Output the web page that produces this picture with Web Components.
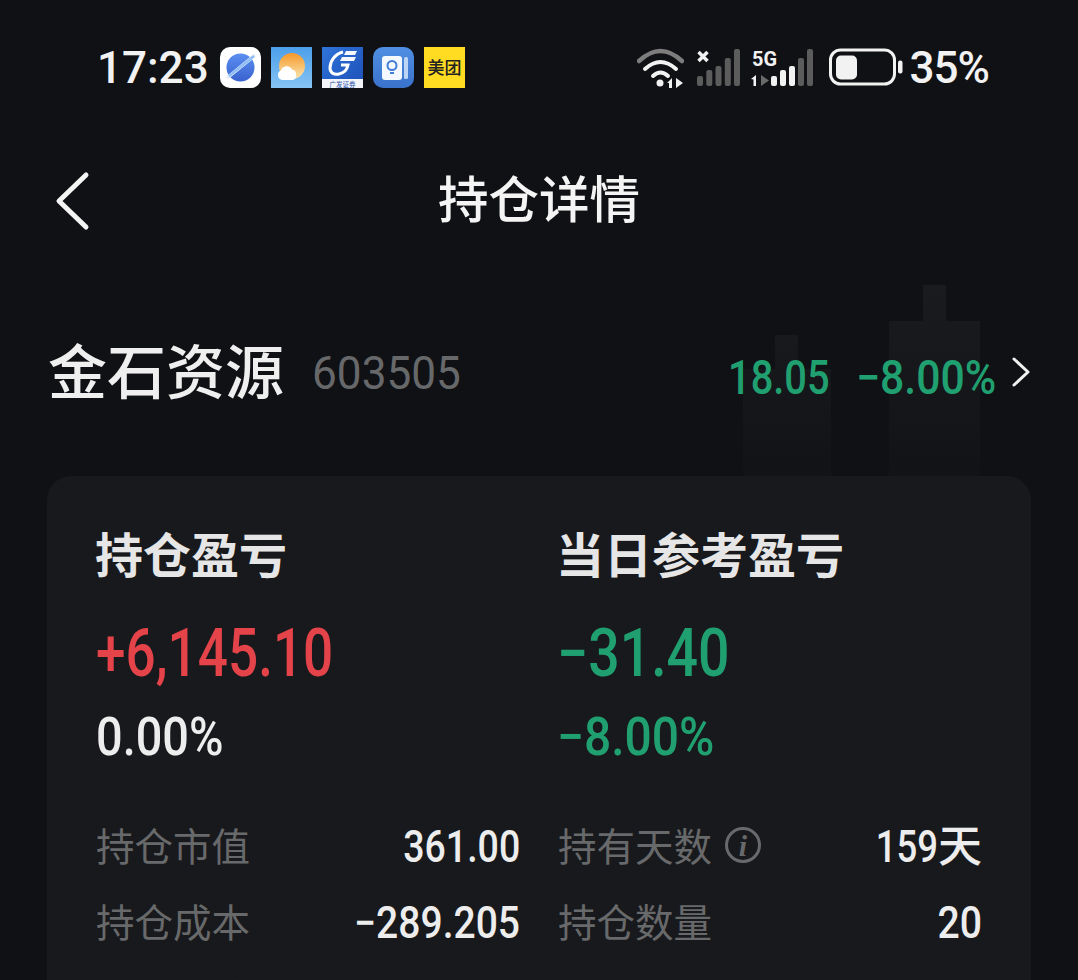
<!DOCTYPE html>
<html><head><meta charset="utf-8">
<style>
html,body{margin:0;padding:0;background:#101114;height:980px;overflow:hidden}
body{font-family:"Noto Sans CJK SC","Noto Sans",sans-serif}
</style></head><body>
<phone-page></phone-page>
<template id="t-num">
<style>:host{display:inline-block;transform:scaleX(var(--sx,1));transform-origin:var(--o,left);white-space:nowrap;font-family:Roboto,sans-serif}</style><slot></slot>
</template>
<template id="t-status">
<style>
:host{display:flex;align-items:center;height:135px;padding:0 89px 0 97px;box-sizing:border-box;justify-content:space-between;color:#f2f2f2;font-family:Roboto,sans-serif}
.l,.r{display:flex;align-items:center}
.time{font-size:44px;font-weight:500;width:123px;white-space:nowrap}
.l svg{display:block;margin-right:10px}
.l svg:last-child{margin-right:0}
.pct{font-size:44px;font-weight:500;margin-left:6px;letter-spacing:-1px}
.r svg{display:block}
</style>
<div class="l">
<span class="time">17:23</span>
<svg width="41" height="41" viewBox="0 0 41 41"><defs><linearGradient id="pl" x1="0" y1="0" x2="0" y2="1"><stop offset="0" stop-color="#5b8ff0"/><stop offset="1" stop-color="#3a62cf"/></linearGradient></defs><rect width="41" height="41" rx="10" fill="#fff"/><circle cx="20.500" cy="20.500" r="14" fill="url(#pl)"/><path d="M7 31 L35 8" stroke="#e4eefc" stroke-width="3.500"/><path d="M9 29 L34 9" stroke="#8fbdf5" stroke-width="2.500"/></svg>
<svg width="41" height="41" viewBox="0 0 41 41"><defs><linearGradient id="s" x1="0" y1="0" x2="0" y2="1"><stop offset="0" stop-color="#f5982a"/><stop offset="1" stop-color="#fbe6b0"/></linearGradient><linearGradient id="sk" x1="0" y1="0" x2="0" y2="1"><stop offset="0" stop-color="#4b9fea"/><stop offset="1" stop-color="#86c4f4"/></linearGradient></defs><rect width="41" height="41" fill="url(#sk)"/><circle cx="21" cy="19" r="13" fill="url(#s)"/><path d="M11 33a5 5 0 0 1-1-9.500 6 6 0 0 1 11-1 5 5 0 0 1 4 5.500 4.500 4.500 0 0 1-3 5z" fill="#fff"/></svg>
<svg width="41" height="41" viewBox="0 0 41 41"><defs><linearGradient id="gf" x1="0" y1="0" x2="1" y2="1"><stop offset="0" stop-color="#2f74d8"/><stop offset="1" stop-color="#1d4fb8"/></linearGradient></defs><rect width="41" height="41" fill="url(#gf)"/><rect y="32" width="41" height="9" fill="#f2f4f8"/><path d="M21 5C13 7 8 14 8 21c0 5 4 7 9 6 5-1 8-4 9-9h-7" fill="none" stroke="#fff" stroke-width="3"/><path d="M18 14l2-4h14l-2 4zM22 8l2-4h11l-2 4z" fill="#fff" opacity=".95"/><text x="20.500" y="39.500" font-size="6.500" text-anchor="middle" fill="#1f4fa8" font-family="Noto Sans CJK SC">广发证券</text></svg>
<svg width="41" height="41" viewBox="0 0 41 41"><defs><linearGradient id="bk" x1="0" y1="0" x2="0" y2="1"><stop offset="0" stop-color="#4f8fe2"/><stop offset="1" stop-color="#3a72cc"/></linearGradient></defs><rect width="41" height="41" rx="10" fill="url(#bk)"/><rect x="9" y="9" width="20" height="24" rx="3" fill="#f4f8ff"/><rect x="31" y="10" width="4" height="22" rx="1.500" fill="#bcd5f5"/><circle cx="19" cy="18.500" r="4.500" fill="none" stroke="#3f7fd8" stroke-width="2"/><path d="M17 26h4" stroke="#3f7fd8" stroke-width="2"/></svg>
<svg width="41" height="41" viewBox="0 0 41 41"><rect width="41" height="41" fill="#ffdb22"/><text x="20.500" y="26.500" font-size="17" font-weight="500" text-anchor="middle" fill="#222" font-family="Noto Sans CJK SC">美团</text></svg>
</div>
<div class="r">
<svg width="47" height="42" viewBox="0 0 47 42" fill="none" style="margin-right:13px"><path d="M2 14Q23.500 -6 45 14" stroke="#7d7d7d" stroke-width="4.500" stroke-linecap="round"/><path d="M8 22Q23.500 8 39 22M16 29Q23.500 22 31 29" stroke="#f2f2f2" stroke-width="4" stroke-linecap="round"/><circle cx="23" cy="36" r="3.500" fill="#f2f2f2"/><path d="M30 36l5-5v10h-3v-5zM39 31l7 5-7 5z" fill="#f2f2f2"/></svg>
<svg width="43" height="40" viewBox="0 0 43 40" style="margin-right:11px"><path d="M1.500 4l9 9M10.500 4l-9 9" stroke="#f2f2f2" stroke-width="3.500"/><g fill="#5c5c5c"><rect x="0" y="28" width="6" height="10" rx="2"/><rect x="9.300" y="22" width="6" height="16" rx="2"/><rect x="18.500" y="18" width="6" height="20" rx="2"/><rect x="27.800" y="10" width="6" height="28" rx="2"/><rect x="37" y="1" width="6" height="37" rx="2"/></g></svg>
<svg width="63" height="40" viewBox="0 0 63 40" style="margin-right:15px"><text x="1" y="18" font-size="20" font-weight="700" fill="#f2f2f2" font-family="Roboto" textLength="25" lengthAdjust="spacingAndGlyphs">5G</text><path d="M0 31l5-4v11H2.500V31.500z" fill="#f2f2f2"/><path d="M10 27l8 5.500-8 5.500z" fill="#6a6a6a"/><g fill="#f2f2f2"><rect x="20" y="28" width="6" height="10" rx="2"/><rect x="29" y="22" width="6" height="16" rx="2"/><rect x="38" y="18" width="6" height="20" rx="2"/></g><rect x="47" y="10" width="6" height="28" rx="2" fill="#5c5c5c"/><rect x="56" y="1" width="6" height="37" rx="2" fill="#5c5c5c"/></svg>
<svg width="75" height="40" viewBox="0 0 75 40" fill="none"><rect x="1.500" y="2" width="64" height="34" rx="10" stroke="#f2f2f2" stroke-width="3"/><rect x="7" y="7.500" width="21" height="24" rx="5" fill="#f2f2f2"/><rect x="69" y="12.500" width="4.500" height="13" rx="2" fill="#f2f2f2"/></svg>
<span class="pct">35%</span>
</div>
</template>
<template id="t-nav">
<style>
:host{display:flex;align-items:center;justify-content:center;position:relative;height:132px;box-sizing:border-box;padding-bottom:9px;color:#f4f4f4}
svg{position:absolute;left:54px;top:36px}
h1{margin:0;font-size:50.500px;font-weight:500;line-height:1}
</style>
<svg width="36" height="60" viewBox="0 0 36 60" fill="none"><path d="M32 4L5 30l27 26" stroke="#f4f4f4" stroke-width="5" stroke-linecap="round" stroke-linejoin="round"/></svg>
<h1><slot></slot></h1>
</template>
<template id="t-stock">
<style>
:host{display:flex;align-items:center;height:209px;box-sizing:border-box;padding:0 47px 0 49px;position:relative}
.n{font-size:59px;font-weight:500;color:#efefef;line-height:1;margin-left:-1px;padding-bottom:6px}
.c{font-size:46px;color:#67686a;margin-left:28px;width:147px;--sx:.96;padding-top:3px}
.sp{flex:1}
.g{font-size:48px;font-weight:500;color:#20a070;display:block;padding-top:3px}
.a{width:101px;--sx:.83;margin-right:27px}
.b{width:137px;--sx:.89}
.ch{margin-left:18px;display:block}
.bg{position:absolute;left:0;top:0;pointer-events:none}
.row{position:relative;display:flex;align-items:center;width:100%}
</style>
<svg class="bg" width="1078" height="209" viewBox="0 0 1078 209"><defs><linearGradient id="c" x1="0" y1="0" x2="0" y2="1"><stop offset="0" stop-color="#1a1b1e"/><stop offset="1" stop-color="#111317"/></linearGradient></defs><path fill="url(#c)" d="M775 68h23v34h33v107h-88V102h32zM923 18h23v36h34v155h-91V54h34z"/></svg>
<div class="row"><span class="n">金石资源</span><din-num class="c">603505</din-num><span class="sp"></span><span class="g a"><din-num>18.05</din-num></span><span class="g b"><din-num>−8.00%</din-num></span>
<svg class="ch" width="20" height="32" viewBox="0 0 20 32" fill="none"><path d="M3 3l14 13L3 29" stroke="#f0f0f0" stroke-width="3" stroke-linecap="round" stroke-linejoin="round"/></svg></div>
</template>
<template id="t-card">
<style>
:host{display:block;margin:0 47px;height:600px;background:#18191c;border-radius:24px;padding:48px 49px 0;box-sizing:border-box}
.g{display:grid;grid-template-columns:462px 1fr;}
</style>
<div class="g"><slot></slot></div>
</template>
<template id="t-pnl">
<style>
:host{display:flex;flex-direction:column;font-family:Roboto,sans-serif;margin:0 0 43px var(--ml,0)}
.t{font-family:"Noto Sans CJK SC",sans-serif;font-size:48px;font-weight:700;color:#e6e6e6;line-height:56px;margin-left:-1px}
.v{font-size:66px;font-weight:500;line-height:70px;margin-top:39px;color:var(--c)}
.p{font-size:53px;font-weight:500;line-height:56px;margin-top:20px;color:var(--p)}
</style>
<span class="t"><slot name="t"></slot></span><span class="v"><slot name="v"></slot></span><span class="p"><slot name="p"></slot></span>
</template>
<template id="t-kv">
<style>
:host{display:flex;align-items:center;height:76px;justify-content:space-between;width:var(--w,424px);--o:right}
.k{font-family:"Noto Sans CJK SC",sans-serif;font-size:38.500px;color:#68696b;display:flex;align-items:center;gap:12px;line-height:1;padding-bottom:3px}
.v{font-family:Roboto,"Noto Sans CJK SC",sans-serif;font-size:44px;font-weight:500;color:#ededed;padding-top:2px;line-height:52px}
svg{display:none}
:host([info]) svg{display:block}
</style>
<span class="k"><slot name="k"></slot><svg width="38" height="38" viewBox="0 0 38 38" fill="none"><circle cx="19" cy="19" r="16.500" stroke="#68696b" stroke-width="3"/><text x="19" y="30" text-anchor="middle" font-family="Liberation Serif" font-style="italic" font-weight="700" font-size="30" fill="#68696b">i</text></svg></span>
<span class="v"><slot name="v"></slot></span>
</template>
<script>
function def(tag,tid){customElements.define(tag,class extends HTMLElement{constructor(){super();this.attachShadow({mode:'open'}).append(document.getElementById(tid).content.cloneNode(true));}});}
def('din-num','t-num');def('status-bar','t-status');def('nav-bar','t-nav');def('stock-head','t-stock');def('hold-card','t-card');def('pnl-block','t-pnl');def('kv-row','t-kv');
customElements.define('phone-page',class extends HTMLElement{constructor(){super();const s=this.attachShadow({mode:'open'});
s.innerHTML=`<style>:host{display:block;width:1078px;height:980px;overflow:hidden;background:#101114;font-family:"Noto Sans CJK SC",sans-serif}</style>
<status-bar></status-bar><nav-bar>持仓详情</nav-bar><stock-head></stock-head>
<hold-card>
<pnl-block style="--c:#e5434a;--p:#ededed"><span slot="t">持仓盈亏</span><din-num slot="v" style="--sx:.805">+6,145.10</din-num><din-num slot="p" style="--sx:.885">0.00%</din-num></pnl-block>
<pnl-block style="--c:#20a070;--p:#20a070;--ml:-1px"><span slot="t">当日参考盈亏</span><din-num slot="v" style="--sx:.84">−31.40</din-num><din-num slot="p" style="--sx:.905">−8.00%</din-num></pnl-block>
<kv-row><span slot="k">持仓市值</span><din-num slot="v" style="--sx:.853">361.00</din-num></kv-row>
<kv-row info style="--w:424px"><span slot="k">持有天数</span><span slot="v"><din-num style="--sx:.83">159</din-num>天</span></kv-row>
<kv-row><span slot="k">持仓成本</span><din-num slot="v" style="--sx:.887">−289.205</din-num></kv-row>
<kv-row><span slot="k">持仓数量</span><din-num slot="v" style="--sx:.89">20</din-num></kv-row>
<kv-row><span slot="k">个股仓位</span></kv-row>
<kv-row><span slot="k">可用数量</span></kv-row>
</hold-card>`;}});
</script>
</body></html>
